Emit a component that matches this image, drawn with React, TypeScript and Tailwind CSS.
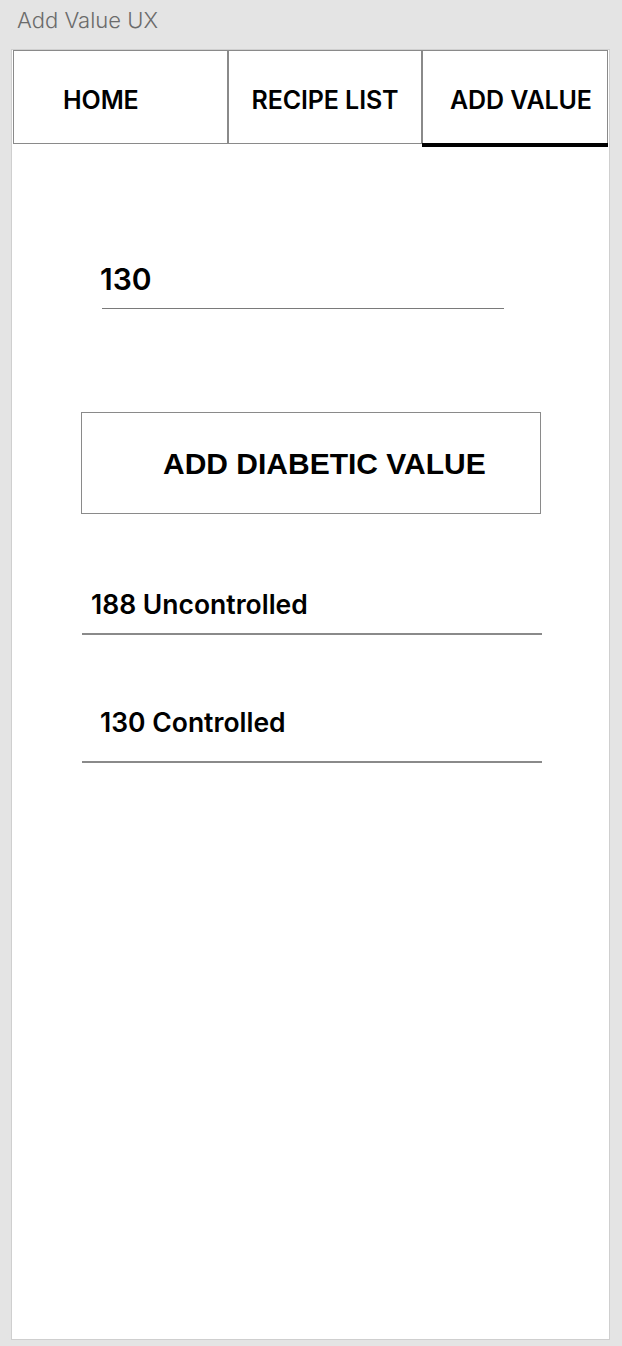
export default function App() {
  const tabs = [
    { label: "HOME", active: false, box: "w-[215px] justify-start pl-[49px]" },
    { label: "RECIPE LIST", active: false, box: "w-[194px] justify-center" },
    { label: "ADD VALUE", active: true, box: "w-[186px] justify-start pl-[27px]" },
  ];

  return (
    <div className="min-h-screen bg-[#e4e4e4] pb-[6px] font-['Inter',sans-serif]">
      <div className="px-[17px] pt-[8px] pb-[16px] text-[22px] leading-[25px] font-light text-[#6b6b6b]">
        Add Value UX
      </div>
      <div className="ml-[11px] h-[1291px] w-[599px] border border-[#cfcfcf] bg-white">
        <nav className="flex pl-px">
          {tabs.map((tab) => (
            <div
              key={tab.label}
              className={`relative flex h-[94px] items-center border border-[#8a8a8a] pt-[8px] text-[25px] font-semibold tracking-[-0.1px] text-black ${tab.box}`}
            >
              {tab.label}
              {tab.active && (
                <span className="absolute -bottom-[4px] -left-px -right-px h-[4px] bg-black" />
              )}
            </div>
          ))}
        </nav>

        <div className="ml-[90px] mt-[117px] w-[402px]">
          <div className="-ml-[2px] text-[30px] font-semibold leading-[36px] text-black">
            130
          </div>
          <div className="mt-[11px] h-px bg-[#7a7a7a]" />
        </div>

        <button className="ml-[69px] mt-[103px] flex h-[102px] w-[460px] items-center border border-[#8a8a8a] pl-[81px] font-['Liberation_Sans',Arial,sans-serif] text-[30px] font-bold text-black">
          ADD DIABETIC VALUE
        </button>

        <div className="ml-[70px] mt-[75px] w-[460px]">
          <div className="pl-[9px] text-[26.5px] font-semibold leading-[30px] text-black">
            188 Uncontrolled
          </div>
          <div className="mt-[14px] h-[2px] bg-[#8a8a8a]" />
        </div>

        <div className="ml-[70px] mt-[72px] w-[460px]">
          <div className="pl-[18px] text-[26.5px] font-semibold leading-[30px] text-black">
            130 Controlled
          </div>
          <div className="mt-[24px] h-[2px] bg-[#8a8a8a]" />
        </div>
      </div>
    </div>
  );
}
